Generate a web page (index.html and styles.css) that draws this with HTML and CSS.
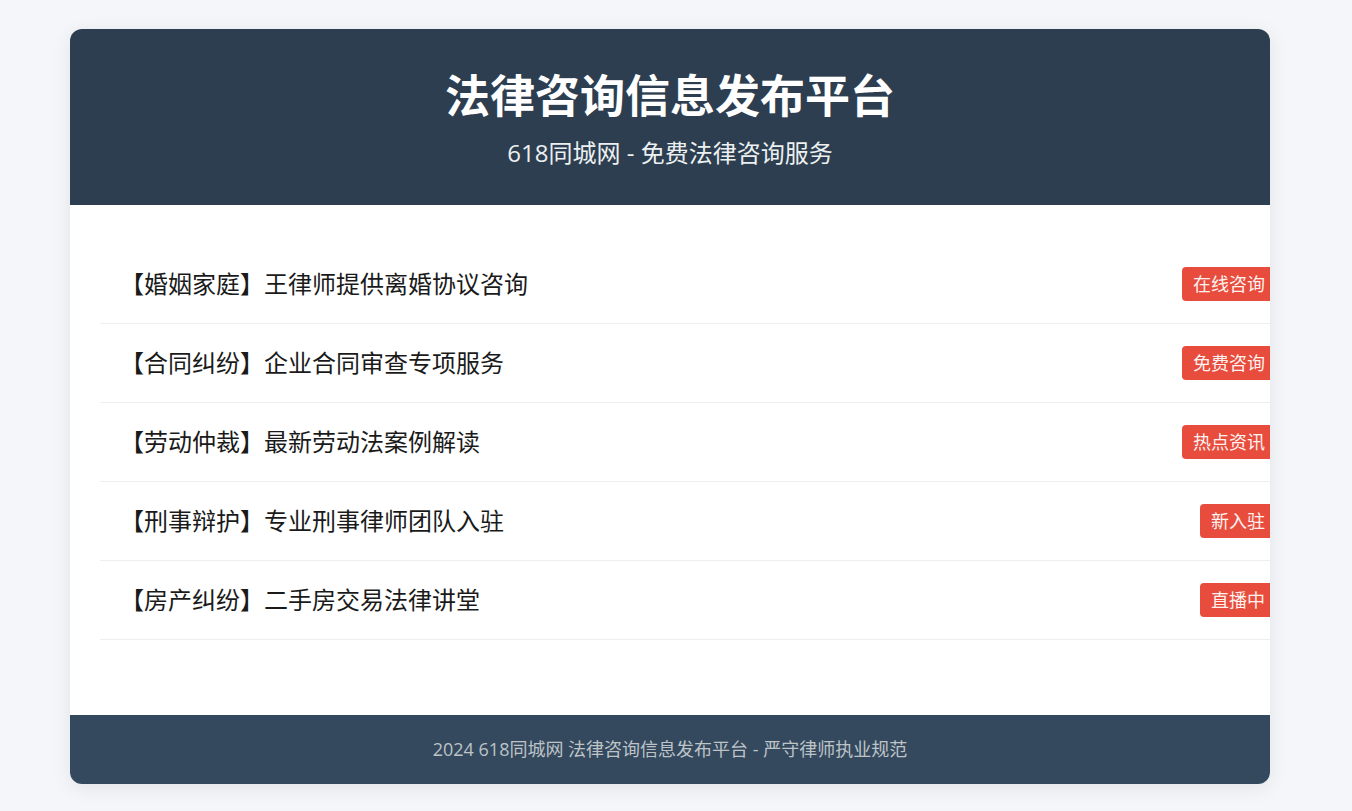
FILE: index.html
```html
<!DOCTYPE html>
<html lang="zh-CN">
<head>
  <meta charset="UTF-8">
  <meta name="viewport" content="width=device-width, initial-scale=1.0">
  <title>法律咨询信息发布平台</title>
  <link rel="stylesheet" href="styles.css">
</head>
<body>
  <div class="container">
    <div class="header">
      <h1 class="title">法律咨询信息发布平台</h1>
      <p class="subtitle">618同城网 - 免费法律咨询服务</p>
    </div>
    <ul class="list">
      <li class="item">
        <span class="item-title">【婚姻家庭】王律师提供离婚协议咨询</span>
        <span class="tag">在线咨询</span>
      </li>
      <li class="item">
        <span class="item-title">【合同纠纷】企业合同审查专项服务</span>
        <span class="tag">免费咨询</span>
      </li>
      <li class="item">
        <span class="item-title">【劳动仲裁】最新劳动法案例解读</span>
        <span class="tag">热点资讯</span>
      </li>
      <li class="item">
        <span class="item-title">【刑事辩护】专业刑事律师团队入驻</span>
        <span class="tag">新入驻</span>
      </li>
      <li class="item">
        <span class="item-title">【房产纠纷】二手房交易法律讲堂</span>
        <span class="tag">直播中</span>
      </li>
    </ul>
    <div class="footer">2024 618同城网 法律咨询信息发布平台 - 严守律师执业规范</div>
  </div>
</body>
</html>
```

FILE: styles.css
```css
body {
  margin: 0;
  padding: 29px 12px 29px 0;
  font-family: "Open Sans", "Noto Sans CJK SC", sans-serif;
  background-color: #f4f6fa;
}
.container {
  width: 1200px;
  margin: 0 auto;
  background: #fff;
  border-radius: 12px;
  overflow: hidden;
  box-shadow: 0 4px 20px rgba(0, 0, 0, 0.08);
}
.header {
  background: #2c3e50;
  color: #fff;
  text-align: center;
  padding: 40px 20px 36px;
}
.title {
  margin: 0 0 14px;
  font-size: 45px;
  line-height: 54px;
  font-weight: bold;
}
.subtitle {
  margin: 0;
  font-size: 24px;
  line-height: 32px;
  color: #ecf0f1;
}
.list {
  list-style: none;
  margin: 0;
  width: 100%;
  padding: 40px 30px 75px;
}
.item {
  display: flex;
  justify-content: space-between;
  align-items: center;
  padding: 22px 24px 22px 20px;
  border-bottom: 1px solid #eee;
}
.item-title {
  font-size: 24px;
  line-height: 34px;
  color: #1a1a1a;
}
.tag {
  background: #e74c3c;
  color: #fdf2f0;
  font-size: 18px;
  line-height: 24px;
  padding: 5px 11px;
  border-radius: 4px;
}
.footer {
  background: #34495e;
  color: #bdc3c7;
  text-align: center;
  font-size: 18px;
  line-height: 29px;
  padding: 20px;
}
```
